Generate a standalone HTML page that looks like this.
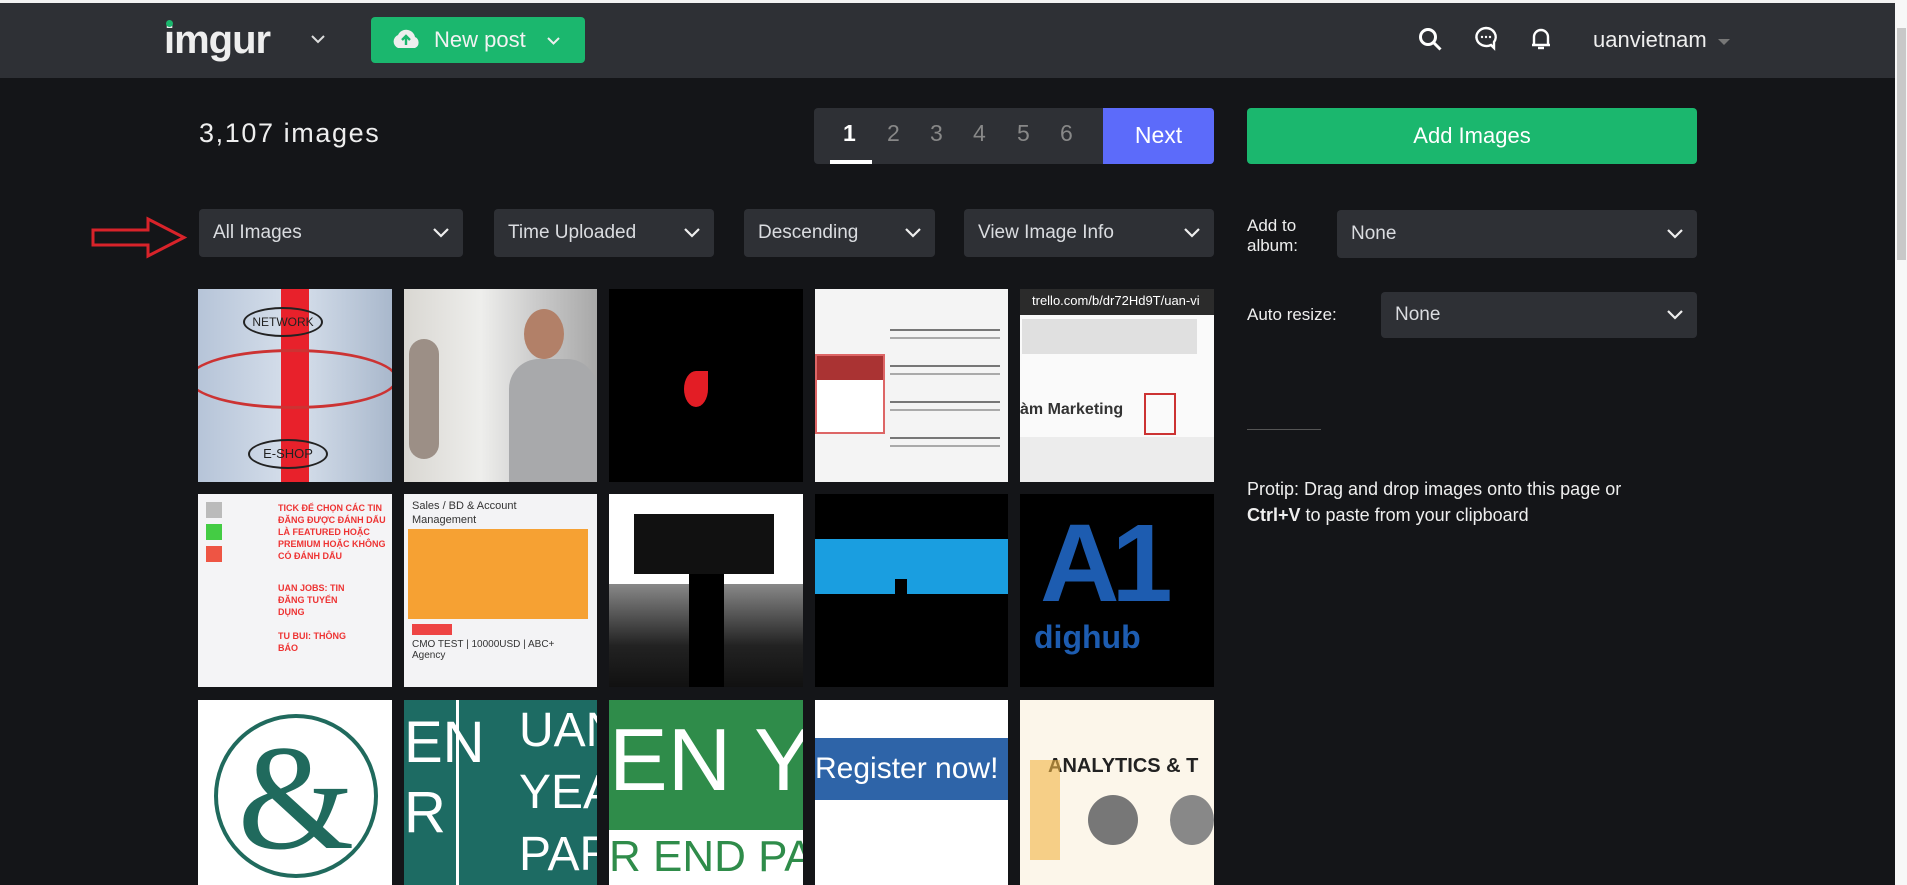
<!DOCTYPE html>
<html><head><meta charset="utf-8"><style>
*{margin:0;padding:0;box-sizing:border-box}
body{width:1907px;height:885px;overflow:hidden;background:#141518;font-family:"Liberation Sans","DejaVu Sans",sans-serif;color:#fff;position:relative}
.a{position:absolute}
.hdr{left:0;top:0;width:1895px;height:78px;background:#2e3035;border-top:3px solid #f2f2f2}
.dd{background:#2e3035;border-radius:4px;color:#dadce0;font-size:19px;padding-left:14px;display:flex;align-items:center}
.dd svg{position:absolute;right:14px;top:50%;margin-top:-5px}
.t{position:absolute;overflow:hidden}
.pn{position:absolute;top:120px;font-size:23px;color:#888}
</style></head><body>
<div class="a hdr"></div>
<div class="a" style="left:1895px;top:0;width:12px;height:885px;background:#f7f7f7"></div>
<div class="a" style="left:1897px;top:28px;width:9px;height:232px;background:#c8c8c8"></div>
<div class="a" style="left:164px;top:18px;font-size:40px;font-weight:bold;letter-spacing:-1px;color:#eee">imgur</div>
<div class="a" style="left:166px;top:20px;width:7px;height:7px;border-radius:50%;background:#1bb76e"></div>
<svg class="a" style="left:311px;top:35px" width="14" height="9"><path d="M1 1l6 6 6-6" stroke="#ddd" stroke-width="2" fill="none"/></svg>
<div class="a" style="left:371px;top:17px;width:214px;height:46px;background:#1bb76e;border-radius:4px"></div>
<svg class="a" style="left:390px;top:28px" width="32" height="22"><path d="M8 20a7 7 0 0 1 0-13 9 9 0 0 1 17 2 6 6 0 0 1 0 11z" fill="#eee"/><path d="M16 17v-8M12 12l4-4 4 4" stroke="#1bb76e" stroke-width="2.4" fill="none"/></svg>
<div class="a" style="left:434px;top:27px;font-size:22px;color:#f2f2f2">New post</div>
<svg class="a" style="left:547px;top:37px" width="13" height="8"><path d="M1 1l5.5 5.5L12 1" stroke="#eee" stroke-width="2" fill="none"/></svg>
<svg class="a" style="left:1418px;top:27px" width="26" height="26"><circle cx="10" cy="10" r="7.5" stroke="#fff" stroke-width="3" fill="none"/><path d="M15.5 15.5l7 7" stroke="#fff" stroke-width="3"/></svg>
<svg class="a" style="left:1472px;top:25px" width="28" height="28"><path d="M14 3a10 9 0 1 0 5 17l3 3v-6a10 9 0 0 0-8-14z" stroke="#fff" stroke-width="2.4" fill="none"/><circle cx="10" cy="12" r="1.2" fill="#fff"/><circle cx="14" cy="12" r="1.2" fill="#fff"/><circle cx="18" cy="12" r="1.2" fill="#fff"/></svg>
<svg class="a" style="left:1530px;top:26px" width="22" height="26"><path d="M4 19V11a7 7 0 0 1 14 0v8zM2 19h18" stroke="#fff" stroke-width="2.4" fill="none"/><path d="M8 22h6" stroke="#fff" stroke-width="2.4"/></svg>
<div class="a" style="left:1593px;top:27px;font-size:22px;color:#eee">uanvietnam</div>
<svg class="a" style="left:1718px;top:39px" width="12" height="7"><path d="M0 0h12L6 6z" fill="#777"/></svg>

<div class="a" style="left:199px;top:118px;font-size:27px;letter-spacing:1.6px;color:#eee">3,107 images</div>
<div class="a" style="left:814px;top:108px;width:289px;height:56px;background:#2e3035;border-radius:4px 0 0 4px"></div>
<div class="a" style="left:1103px;top:108px;width:111px;height:56px;background:#5c6bfa;border-radius:0 4px 4px 0;font-size:23px;text-align:center;line-height:55px">Next</div>
<div class="a" style="left:843px;top:120px;font-size:23px;font-weight:bold;color:#fff">1</div>
<div class="a" style="left:830px;top:160px;width:42px;height:4px;background:#fff"></div>
<div class="pn" style="left:887px">2</div><div class="pn" style="left:930px">3</div><div class="pn" style="left:973px">4</div><div class="pn" style="left:1017px">5</div><div class="pn" style="left:1060px">6</div>
<div class="a" style="left:1247px;top:108px;width:450px;height:56px;background:#1bb76e;border-radius:4px;font-size:22px;text-align:center;line-height:56px">Add Images</div>

<svg class="a" style="left:90px;top:215px" width="98" height="45"><path d="M3 15h55V4l36 18.5L58 41V30H3z" stroke="#d8232a" stroke-width="3" fill="none"/></svg>
<div class="a dd" style="left:199px;top:209px;width:264px;height:48px">All Images<svg width="16" height="10"><path d="M1 1l7 7 7-7" stroke="#eee" stroke-width="2.2" fill="none"/></svg></div>
<div class="a dd" style="left:494px;top:209px;width:220px;height:48px">Time Uploaded<svg width="16" height="10"><path d="M1 1l7 7 7-7" stroke="#eee" stroke-width="2.2" fill="none"/></svg></div>
<div class="a dd" style="left:744px;top:209px;width:191px;height:48px">Descending<svg width="16" height="10"><path d="M1 1l7 7 7-7" stroke="#eee" stroke-width="2.2" fill="none"/></svg></div>
<div class="a dd" style="left:964px;top:209px;width:250px;height:48px">View Image Info<svg width="16" height="10"><path d="M1 1l7 7 7-7" stroke="#eee" stroke-width="2.2" fill="none"/></svg></div>
<div class="a" style="left:1247px;top:216px;font-size:17px;line-height:20px;color:#eee">Add to<br>album:</div>
<div class="a dd" style="left:1337px;top:210px;width:360px;height:48px">None<svg width="16" height="10"><path d="M1 1l7 7 7-7" stroke="#eee" stroke-width="2.2" fill="none"/></svg></div>
<div class="a" style="left:1247px;top:305px;font-size:17px;color:#eee">Auto resize:</div>
<div class="a dd" style="left:1381px;top:292px;width:316px;height:46px">None<svg width="16" height="10"><path d="M1 1l7 7 7-7" stroke="#eee" stroke-width="2.2" fill="none"/></svg></div>
<div class="a" style="left:1247px;top:429px;width:74px;height:1px;background:#555"></div>
<div class="a" style="left:1247px;top:476px;font-size:18px;line-height:26px;color:#eee">Protip: Drag and drop images onto this page or<br><b>Ctrl+V</b> to paste from your clipboard</div>

<!-- row 1 -->
<div class="t" style="left:198px;top:289px;width:194px;height:193px;background:linear-gradient(90deg,#b6c4d8,#d7e0ec 50%,#a9b8cc)"><div class="a" style="left:83px;top:0;width:28px;height:193px;background:#e8212b"></div><div class="a" style="left:-10px;top:60px;width:210px;height:60px;border:3px solid #c33;border-radius:50%"></div><div class="a" style="left:45px;top:18px;width:80px;height:30px;border:2px solid #222;border-radius:50%;font-size:12px;color:#222;text-align:center;line-height:26px">NETWORK</div><div class="a" style="left:50px;top:150px;width:80px;height:30px;border:2px solid #222;border-radius:50%;font-size:13px;color:#222;text-align:center;line-height:26px">E-SHOP</div></div>
<div class="t" style="left:404px;top:289px;width:193px;height:193px;background:linear-gradient(90deg,#d9d7d2,#eeeeec 40%,#c9c9c9 70%,#a8a8a8)"><div class="a" style="left:120px;top:20px;width:40px;height:50px;border-radius:50%;background:#b28068"></div><div class="a" style="left:105px;top:70px;width:88px;height:123px;background:#a8a9ab;border-radius:30px 30px 0 0"></div><div class="a" style="left:5px;top:50px;width:30px;height:120px;background:#9c8f86;border-radius:15px"></div></div>
<div class="t" style="left:609px;top:289px;width:194px;height:193px;background:#000"><div class="a" style="left:75px;top:82px;width:24px;height:36px;background:#e31d25;border-radius:50% 0 50% 50%"></div></div>
<div class="t" style="left:815px;top:289px;width:193px;height:193px;background:#f4f4f4"><div class="a" style="left:0;top:65px;width:70px;height:80px;border:2px solid #d66;background:#fff"></div><div class="a" style="left:2px;top:67px;width:66px;height:24px;background:#a33"></div><div class="a" style="left:75px;top:30px;width:110px;height:150px;background:repeating-linear-gradient(#f4f4f4 0 10px,#777 10px 12px,#f4f4f4 12px 18px,#aaa 18px 20px,#f4f4f4 20px 36px)"></div></div>
<div class="t" style="left:1020px;top:289px;width:194px;height:193px;background:#fafafa"><div class="a" style="left:0;top:0;width:194px;height:26px;background:#2b2b2b;color:#fff;font-size:13px;padding:4px 12px;white-space:nowrap">trello.com/b/dr72Hd9T/uan-vi</div><div class="a" style="left:2px;top:30px;width:175px;height:35px;background:#e0e0e0"></div><div class="a" style="left:0;top:112px;font-size:16px;color:#333;font-weight:bold;white-space:nowrap">àm Marketing</div><div class="a" style="left:124px;top:104px;width:32px;height:42px;border:2px solid #c33"></div><div class="a" style="left:0;top:148px;width:194px;height:45px;background:#ececec"></div></div>
<!-- row 2 -->
<div class="t" style="left:198px;top:494px;width:194px;height:193px;background:#f4f4f6;font-size:8px;color:#555"><div class="a" style="left:8px;top:8px;width:16px;height:16px;background:#bbb"></div><div class="a" style="left:8px;top:30px;width:16px;height:16px;background:#4c4"></div><div class="a" style="left:8px;top:52px;width:16px;height:16px;background:#e54"></div><div class="a" style="left:80px;top:8px;font-size:9px;font-weight:bold;color:#e33;line-height:12px">TICK ĐỂ CHỌN CÁC TIN<br>ĐĂNG ĐƯỢC ĐÁNH DẤU<br>LÀ FEATURED HOẶC<br>PREMIUM HOẶC KHÔNG<br>CÓ ĐÁNH DẤU</div><div class="a" style="left:80px;top:88px;font-size:9px;font-weight:bold;color:#e33;line-height:12px">UAN JOBS: TIN<br>ĐĂNG TUYỂN<br>DỤNG<br><br>TU BUI: THÔNG<br>BÁO</div></div>
<div class="t" style="left:404px;top:494px;width:193px;height:193px;background:#f3f3f5"><div class="a" style="left:8px;top:5px;font-size:11px;color:#333;line-height:14px">Sales / BD &amp; Account<br>Management</div><div class="a" style="left:4px;top:35px;width:180px;height:90px;background:#f6a133"></div><div class="a" style="left:8px;top:130px;width:40px;height:11px;background:#e44"></div><div class="a" style="left:8px;top:145px;font-size:10px;color:#333">CMO TEST | 10000USD | ABC+<br>Agency</div></div>
<div class="t" style="left:609px;top:494px;width:194px;height:193px;background:#fff"><div class="a" style="left:0;top:90px;width:194px;height:103px;background:linear-gradient(#888,#222 60%,#111)"></div><div class="a" style="left:25px;top:20px;width:140px;height:60px;background:#111"></div><div class="a" style="left:80px;top:80px;width:35px;height:113px;background:#000"></div></div>
<div class="t" style="left:815px;top:494px;width:193px;height:193px;background:#000"><div class="a" style="left:0;top:45px;width:193px;height:55px;background:#1a9ee0"></div><div class="a" style="left:80px;top:85px;width:12px;height:30px;background:#000"></div></div>
<div class="t" style="left:1020px;top:494px;width:194px;height:193px;background:#000"><div class="a" style="left:20px;top:10px;font-size:110px;font-weight:bold;color:#1d5cb0;letter-spacing:-8px;line-height:120px">A1</div><div class="a" style="left:14px;top:125px;font-size:32px;font-weight:bold;color:#1d5cb0">dighub</div></div>
<!-- row 3 -->
<div class="t" style="left:198px;top:700px;width:194px;height:185px;background:#fff"><div class="a" style="left:16px;top:14px;width:164px;height:164px;border:4px solid #206a5d;border-radius:50%;text-align:center;font-family:'Liberation Serif',serif;font-size:150px;color:#206a5d;line-height:160px">&amp;</div></div>
<div class="t" style="left:404px;top:700px;width:193px;height:185px;background:#1d6b63;font-size:58px;color:#fff;line-height:70px"><div class="a" style="left:0;top:8px">EN<br>R</div><div class="a" style="left:52px;top:0;width:3px;height:185px;background:#fff"></div><div class="a" style="left:115px;top:0;font-size:48px;line-height:62px">UAN<br>YEA<br>PAR</div></div>
<div class="t" style="left:609px;top:700px;width:194px;height:185px;background:#fff"><div class="a" style="left:0;top:0;width:194px;height:130px;background:#2f8c4a;color:#fff;font-size:88px;line-height:120px;white-space:nowrap">EN Y</div><div class="a" style="left:0;top:132px;font-size:44px;color:#2f8c4a;white-space:nowrap">R END PAR</div></div>
<div class="t" style="left:815px;top:700px;width:193px;height:185px;background:#fff"><div class="a" style="left:0;top:38px;width:193px;height:62px;background:#2e64a8;color:#fff;font-size:30px;line-height:62px;white-space:nowrap">Register now! à</div></div>
<div class="t" style="left:1020px;top:700px;width:194px;height:185px;background:#fcf6ea"><div class="a" style="left:28px;top:55px;font-size:20px;font-weight:bold;color:#222;white-space:nowrap">ANALYTICS &amp; T</div><div class="a" style="left:68px;top:95px;width:50px;height:50px;border-radius:50%;background:#777"></div><div class="a" style="left:150px;top:95px;width:44px;height:50px;border-radius:50%;background:#888"></div><div class="a" style="left:10px;top:60px;width:30px;height:100px;background:#f2b544;opacity:.6"></div></div>
</body></html>
